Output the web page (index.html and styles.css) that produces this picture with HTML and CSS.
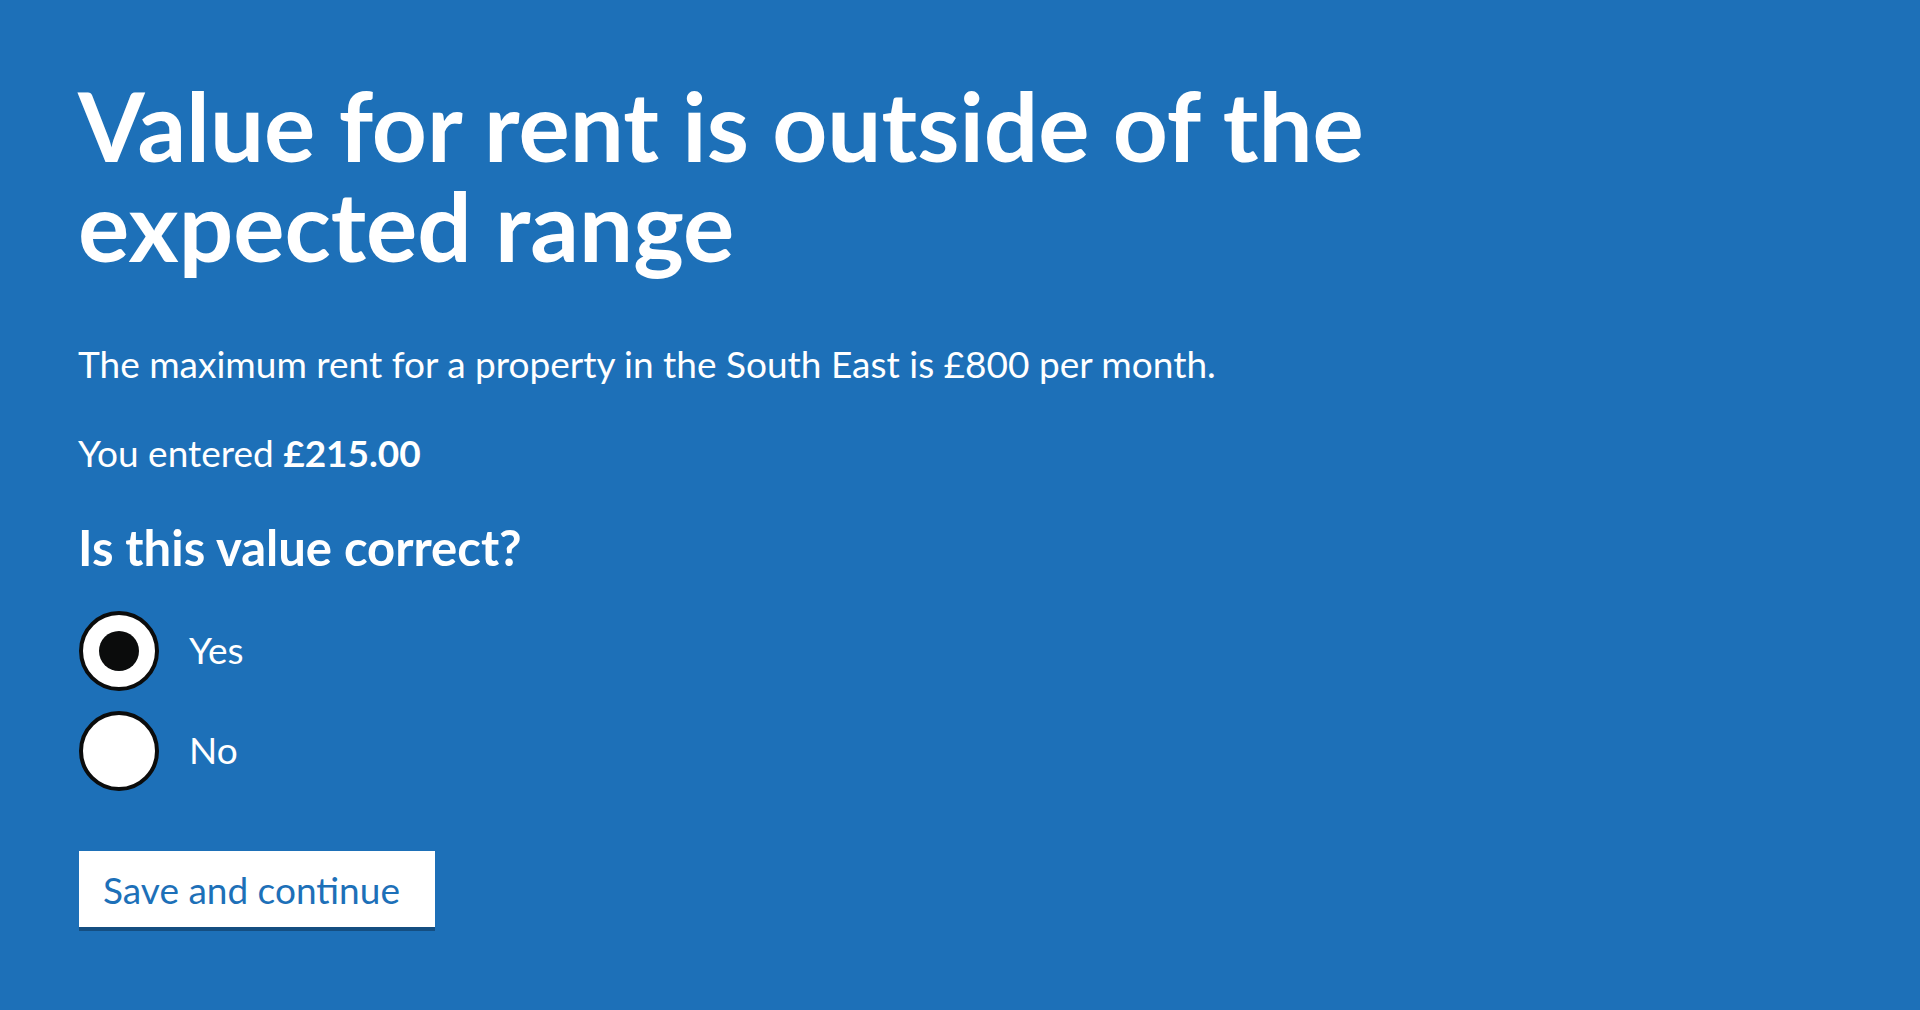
FILE: index.html
```html
<!DOCTYPE html>
<html lang="en">
<head>
<meta charset="utf-8">
<title>Value for rent is outside of the expected range</title>
<link rel="stylesheet" href="styles.css">
</head>
<body>
<main class="page">
  <h1 class="heading">Value for rent is outside of the expected range</h1>
  <p class="body-text first">The maximum rent for a property in the South East is £800 per month.</p>
  <p class="body-text">You entered <strong>£215.00</strong></p>
  <form class="form">
    <fieldset class="fieldset">
      <legend class="legend">Is this value correct?</legend>
      <div class="radios">
        <label class="radio">
          <input class="radio-input" type="radio" name="correct" value="yes" checked>
          <span class="radio-circle checked"></span>
          <span class="radio-label">Yes</span>
        </label>
        <label class="radio">
          <input class="radio-input" type="radio" name="correct" value="no">
          <span class="radio-circle"></span>
          <span class="radio-label">No</span>
        </label>
      </div>
    </fieldset>
    <button class="button" type="button">Save and continue</button>
  </form>
</main>
</body>
</html>
```
FILE: styles.css
```css
html, body {
  margin: 0;
  padding: 0;
  background: #1d70b8;
  height: 100%;
}

body {
  font-family: Lato, "Liberation Sans", sans-serif;
  color: #ffffff;
}

.page {
  padding: 75px 0 0 78px;
}

.heading {
  margin: 0 0 64px;
  max-width: 1400px;
  font-size: 96px;
  line-height: 100px;
  font-weight: 700;
}

.body-text {
  margin: 0 0 39px;
  font-size: 37px;
  line-height: 50px;
  font-weight: 400;
}

.body-text strong {
  font-weight: 700;
}

.form {
  margin: 0;
}

.fieldset {
  margin: 0;
  padding: 0;
  border: 0;
  min-width: 0;
}

.legend {
  padding: 0;
  margin: -1px 0 34px;
  font-size: 49px;
  line-height: 60px;
  font-weight: 700;
}

.radios {
  display: flex;
  flex-direction: column;
  gap: 20px;
  margin-bottom: 60px;
}

.radio {
  display: flex;
  align-items: flex-start;
  cursor: pointer;
}

.radio-input {
  position: absolute;
  opacity: 0;
  width: 1px;
  height: 1px;
  margin: 0;
}

.radio-circle {
  box-sizing: border-box;
  width: 80px;
  height: 80px;
  border: 4px solid #0b0c0c;
  border-radius: 50%;
  background: #ffffff;
  display: flex;
  align-items: center;
  justify-content: center;
  flex: none;
  margin-left: 1px;
}

.radio-circle.checked::after {
  content: "";
  width: 40px;
  height: 40px;
  border-radius: 50%;
  background: #0b0c0c;
}

.radio-label {
  padding: 14px 0 0 30px;
  font-size: 37px;
  line-height: 50px;
}

.button {
  box-sizing: border-box;
  display: inline-block;
  width: 356px;
  margin: 0 0 0 1px;
  padding: 16px 20px 14px 20px;
  border: 4px solid #ffffff;
  border-radius: 0;
  background: #ffffff;
  box-shadow: 0 4px 0 #144e81;
  color: #1d70b8;
  font-family: Lato, "Liberation Sans", sans-serif;
  font-size: 37px;
  line-height: 38px;
  font-weight: 400;
  text-align: left;
  cursor: pointer;
}
```
